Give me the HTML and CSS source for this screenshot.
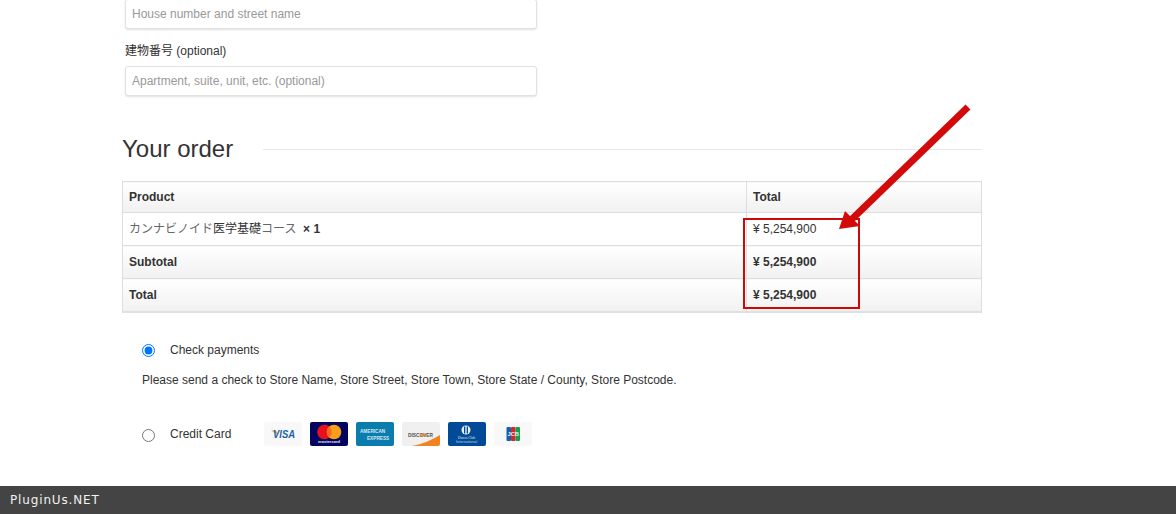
FILE: index.html
```html
<!DOCTYPE html>
<html lang="ja">
<head>
<meta charset="utf-8">
<title>Your order</title>
<link rel="stylesheet" href="styles.css">
</head>
<body>
<main class="page">
  <form class="checkout">
    <div class="field field-first">
      <input class="text-input" type="text" placeholder="House number and street name">
    </div>
    <div class="field">
      <label class="field-label">建物番号 (optional)</label>
      <input class="text-input" type="text" placeholder="Apartment, suite, unit, etc. (optional)">
    </div>
    <div class="section-head">
      <h3 class="section-title">Your order</h3>
      <span class="section-rule"></span>
    </div>
    <table class="order-table">
      <tr class="shaded head-row"><th class="col-product">Product</th><th class="col-total">Total</th></tr>
      <tr><td class="col-product item-cell"><span class="kana">カンナビノイド</span>医学基礎<span class="kana">コース</span>&nbsp; <strong>× 1</strong></td><td class="col-total">¥ 5,254,900</td></tr>
      <tr class="shaded"><th class="col-product subtotal">Subtotal</th><th class="col-total">¥ 5,254,900</th></tr>
      <tr class="shaded"><th class="col-product">Total</th><th class="col-total">¥ 5,254,900</th></tr>
    </table>
    <div class="payment">
      <label class="pay-row pay-check"><input class="radio" type="radio" name="pay" checked><span>Check payments</span></label>
      <p class="pay-note">Please send a check to Store Name, Store Street, Store Town, Store State / County, Store Postcode.</p>
      <div class="pay-row pay-card">
        <input class="radio" type="radio" name="pay"><span class="card-label">Credit Card</span>
        <div class="cards">
          <svg class="card" viewBox="0 0 38 24"><rect width="38" height="24" rx="2" fill="#f8f8f8"/><path d="M7 8.500h5l1.500 4z" fill="#e0a33a"/><text x="9" y="16" class="visa" textLength="22" lengthAdjust="spacingAndGlyphs">VISA</text></svg>
          <svg class="card" viewBox="0 0 38 24"><rect width="38" height="24" rx="2" fill="#02045e"/><circle cx="14.500" cy="10" r="7.300" fill="#e8101c"/><circle cx="24" cy="10" r="7.300" fill="#f79e1b"/><path d="M19.250 4.500a7.300 7.300 0 0 1 0 11a7.300 7.300 0 0 1 0-11z" fill="#f26a1d"/><text x="8" y="21" class="mc" textLength="22" lengthAdjust="spacingAndGlyphs">mastercard</text></svg>
          <svg class="card" viewBox="0 0 38 24"><rect width="38" height="24" rx="2" fill="#0a7cae"/><g transform="scale(1 1.3)"><text x="4" y="8.850" class="amex">AMERICAN</text><text x="11" y="13.850" class="amex">EXPRESS</text></g></svg>
          <svg class="card" viewBox="0 0 38 24"><rect width="38" height="24" rx="2" fill="#f0f0f0"/><path d="M10 24c10-2 20-6 28-11v9a2 2 0 0 1-2 2z" fill="#f58220"/><text x="6" y="15" class="disc" textLength="25" lengthAdjust="spacingAndGlyphs">DISCOVER</text><circle cx="21" cy="13" r="1.800" fill="#f58220"/></svg>
          <svg class="card" viewBox="0 0 38 24"><rect width="38" height="24" rx="2" fill="#004a97"/><circle cx="18" cy="8" r="4.500" fill="#e6eef6"/><rect x="16" y="4.500" width="1.300" height="7" fill="#004a97"/><rect x="18.700" y="4.500" width="1.300" height="7" fill="#004a97"/><text x="10" y="17" class="diners" textLength="17" lengthAdjust="spacingAndGlyphs">Diners Club</text><text x="8" y="20.500" class="diners-sub" textLength="21" lengthAdjust="spacingAndGlyphs">International</text></svg>
          <svg class="card" viewBox="0 0 38 24"><rect width="38" height="24" rx="2" fill="#f8f8f8"/><rect x="12.500" y="5" width="4.500" height="14" rx="1" fill="#0f64b0"/><rect x="17" y="5" width="4.500" height="14" rx="1" fill="#e2202c"/><rect x="21.500" y="5" width="4.500" height="14" rx="1" fill="#10a04a"/><text x="13.500" y="14" class="jcb" textLength="11.500" lengthAdjust="spacingAndGlyphs">JCB</text></svg>
        </div>
      </div>
    </div>
  </form>
  <svg class="annotation" viewBox="0 0 1176 486" aria-hidden="true">
    <rect x="744" y="219" width="115" height="89" fill="none" stroke="#cc0808" stroke-width="2"/>
    <path d="M968 107 851 220" stroke="#d20a0a" stroke-width="7" fill="none"/>
    <path d="M839 229 845 211 860 226z" fill="#d20a0a"/>
  </svg>
</main>
<footer class="brand-bar">PluginUs.NET</footer>
</body>
</html>
```
FILE: styles.css
```css
html, body {
  margin: 0;
  height: 100%;
  overflow: hidden;
}
body {
  display: flex;
  flex-direction: column;
  background: #fff;
  color: #333;
  font-family: "Liberation Sans", Arial, "Noto Sans CJK JP", sans-serif;
  font-size: 12px;
}
.page {
  flex: 1;
  position: relative;
  overflow: hidden;
}
.checkout {
  width: 860px;
  margin: -1px 0 0 122px;
}
.field {
  padding-left: 3px;
  margin-top: 15px;
}
.field-first {
  margin-top: 0;
}
.field-label {
  display: block;
  height: 22px;
  line-height: 15px;
  color: #333;
}
.text-input {
  display: block;
  box-sizing: border-box;
  width: 412px;
  height: 30px;
  padding: 0 6px;
  border: 1px solid #e2e2e2;
  border-radius: 3px;
  box-shadow: 0 1px 2px rgba(0, 0, 0, 0.12);
  font: 12px "Liberation Sans", Arial, sans-serif;
  background: #fff;
}
.text-input::placeholder {
  color: #999;
  opacity: 1;
}
.section-head {
  display: flex;
  align-items: center;
  gap: 30px;
  margin-top: 36px;
  height: 34px;
}
.section-title {
  margin: 0;
  font-size: 24px;
  font-weight: 400;
  line-height: 34px;
  color: #333;
}
.section-rule {
  flex: 1;
  height: 1px;
  background: #e8e8e8;
}
.order-table {
  width: 860px;
  margin-top: 15px;
  border-collapse: collapse;
  table-layout: fixed;
  border: 1px solid #ddd;
  border-bottom: 2px solid #e0e0e0;
}
.order-table tr {
  height: 33px;
}
.order-table .head-row {
  height: 31px;
}
.order-table th,
.order-table td {
  padding: 0 6px;
  border: 1px solid #ddd;
  text-align: left;
  font-size: 12px;
  color: #333;
}
.order-table th {
  font-weight: 700;
}
.order-table .item-cell {
  padding-bottom: 4px;
}
.kana {
  color: #666;
}
.col-product {
  width: 611px;
}
.subtotal {
  padding-left: 7px;
}
.shaded th {
  background: linear-gradient(#fff, #f1f1f1);
}
.payment {
  padding: 30px 0 0 20px;
}
.pay-row {
  display: flex;
  align-items: center;
  color: #333;
}
.radio {
  width: 13px;
  height: 13px;
  margin: 0 15px 0 0;
}
.pay-check .radio {
  margin-top: 1px;
}
.pay-card .radio {
  margin-top: 3px;
}
.pay-note {
  margin: 16px 0 0;
  line-height: 15px;
  color: #333;
}
.pay-card {
  margin-top: 34px;
}
.card-label {
  width: 94px;
}
.cards {
  display: flex;
  gap: 8px;
}
.card {
  width: 38px;
  height: 24px;
  flex: none;
}
.visa {
  font: italic 700 11px "Liberation Sans", Arial, sans-serif;
  fill: #1a5fa8;
}
.mc {
  font: 700 3.500px "Liberation Sans", Arial, sans-serif;
  fill: #e4e4f0;
}
.amex {
  font: 700 4.700px "Liberation Sans", Arial, sans-serif;
  fill: #d4e8f2;
}
.disc {
  font: 700 5px "Liberation Sans", Arial, sans-serif;
  fill: #55514e;
}
.diners {
  font: 3.500px "Liberation Serif", serif;
  fill: #e6eef6;
}
.diners-sub {
  font: 3px "Liberation Sans", Arial, sans-serif;
  fill: #b8cde4;
}
.jcb {
  font: 700 5px "Liberation Sans", Arial, sans-serif;
  fill: #eef2f2;
}
.annotation {
  position: absolute;
  left: 0;
  top: 0;
  width: 1176px;
  height: 486px;
  pointer-events: none;
}
.brand-bar {
  flex: none;
  height: 28px;
  line-height: 28px;
  padding-left: 10px;
  background: #444;
  color: #f2f2f2;
  font-family: "DejaVu Sans", sans-serif;
  font-size: 12px;
  letter-spacing: 0.85px;
}
```
